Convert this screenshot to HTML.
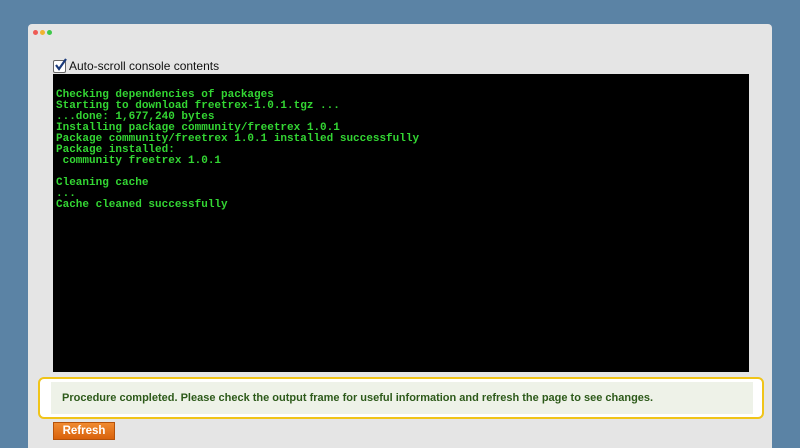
<!DOCTYPE html>
<html style="overflow:hidden"><head><style>
html,body{margin:0;width:800px;height:448px;overflow:hidden}
body{background:#5b83a5;position:relative;font-family:"Liberation Sans",sans-serif}
.win{position:absolute;left:28px;top:24px;width:744px;height:424px;background:#e5e5e5;border-radius:4px 4px 0 0}
.dot{position:absolute;top:6px;width:5px;height:5px;border-radius:50%}
.cb{position:absolute;left:53px;top:59px;font-size:12px;color:#111;display:flex;align-items:center}
.box{width:11px;height:11px;border:1px solid #666;background:#fff;border-radius:2px;margin-right:3px;position:relative}
.con{position:absolute;left:53px;top:74px;width:696px;height:298px;background:#000;color:#33d633;font-family:"Liberation Mono",monospace;font-size:11px;line-height:11px;padding-top:16px;box-sizing:border-box;padding-left:3px;white-space:pre;font-weight:bold}
.msg{position:absolute;left:38px;top:377px;width:722px;height:38px;border:2px solid #f0c419;border-radius:6px;background:#fff}
.inner{position:absolute;left:11px;top:3px;right:9px;bottom:3px;background:#eef2e8;color:#2d5a1a;font-size:11px;font-weight:bold;line-height:32px;padding-left:11px;white-space:nowrap}
.btn{position:absolute;left:53px;top:422px;background:linear-gradient(#f08a30,#d9620c);border:1px solid #b5520a;color:#fff;font-size:11.5px;font-weight:bold;text-align:center;line-height:16px;box-sizing:border-box;width:62px;height:18px}
</style></head><body>
<div class="win">
<div class="dot" style="left:5px;background:#ee5b55"></div>
<div class="dot" style="left:12px;background:#f0b32f"></div>
<div class="dot" style="left:19px;background:#3ec84a"></div>
</div>
<div class="cb"><div class="box"><svg width="13" height="13" style="position:absolute;left:0;top:-3px" viewBox="0 0 13 13"><path d="M2 7 L5 11 L12 1" stroke="#1a3a7a" stroke-width="2.2" fill="none"/></svg></div>Auto-scroll console contents</div>
<div class="con">Checking dependencies of packages
Starting to download freetrex-1.0.1.tgz ...
...done: 1,677,240 bytes
Installing package community/freetrex 1.0.1
Package community/freetrex 1.0.1 installed successfully
Package installed:
 community freetrex 1.0.1

Cleaning cache
...
Cache cleaned successfully</div>
<div class="msg"><div class="inner">Procedure completed. Please check the output frame for useful information and refresh the page to see changes.</div></div>
<div class="btn">Refresh</div>
</body></html>
